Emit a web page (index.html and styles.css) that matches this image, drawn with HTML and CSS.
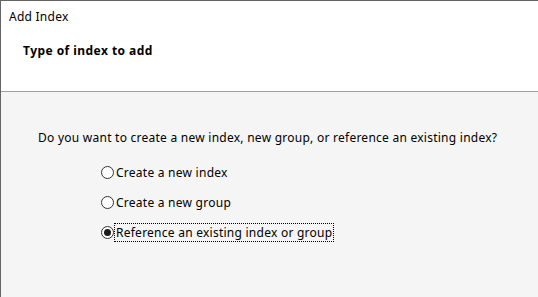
FILE: index.html
```html
<!DOCTYPE html>
<html>
<head>
<meta charset="utf-8">
<link rel="stylesheet" href="styles.css">
</head>
<body>
<div class="window">
  <div class="header">
    <div class="title">Add Index</div>
    <div class="subtitle">Type of index to add</div>
  </div>
  <div class="content">
    <div class="question">Do you want to create a new index, new group, or reference an existing index?</div>
    <div class="options">
      <label class="option"><span class="radio"></span><span class="label">Create a new index</span></label>
      <label class="option"><span class="radio"></span><span class="label">Create a new group</span></label>
      <label class="option"><span class="radio checked"></span><span class="label focus">Reference an existing index or group</span></label>
    </div>
  </div>
</div>
</body>
</html>
```
FILE: styles.css
```css
html, body {
  margin: 0;
  padding: 0;
  width: 538px;
  height: 297px;
  overflow: hidden;
  background: #f5f5f5;
}
body {
  font-family: "Noto Sans", "Open Sans", sans-serif;
  font-size: 12px;
  letter-spacing: 0.25px;
  color: #000;
}
.window {
  box-sizing: border-box;
  width: 538px;
  height: 297px;
  border-left: 1px solid #646464;
  border-top: 1px solid #646464;
  display: flex;
  flex-direction: column;
}
.header {
  background: #fff;
  height: 90px;
  border-bottom: 1px solid #a0a0a0;
  flex: none;
}
.title {
  padding: 8px 0 0 8px;
  line-height: 16px;
}
.subtitle {
  font-weight: bold;
  letter-spacing: 0.45px;
  padding: 18px 0 0 22px;
  line-height: 16px;
}
.content {
  flex: 1;
  background: #f5f5f5;
}
.question {
  padding: 38px 0 0 37px;
  line-height: 16px;
}
.options {
  display: flex;
  flex-direction: column;
  gap: 13px;
  padding: 18px 0 0 100px;
}
.option {
  display: flex;
  align-items: center;
  height: 17px;
}
.radio {
  box-sizing: border-box;
  width: 13px;
  height: 13px;
  border: 1px solid #333;
  border-radius: 50%;
  background: #fff;
  position: relative;
  flex: none;
}
.radio.checked::after {
  content: "";
  position: absolute;
  left: 2px;
  top: 2px;
  width: 7px;
  height: 7px;
  border-radius: 50%;
  background: #1a1a1a;
}
.label {
  line-height: 17px;
  padding: 0 1px;
  border: 1px dotted transparent;
}
.label.focus {
  border-color: #000;
}
```
